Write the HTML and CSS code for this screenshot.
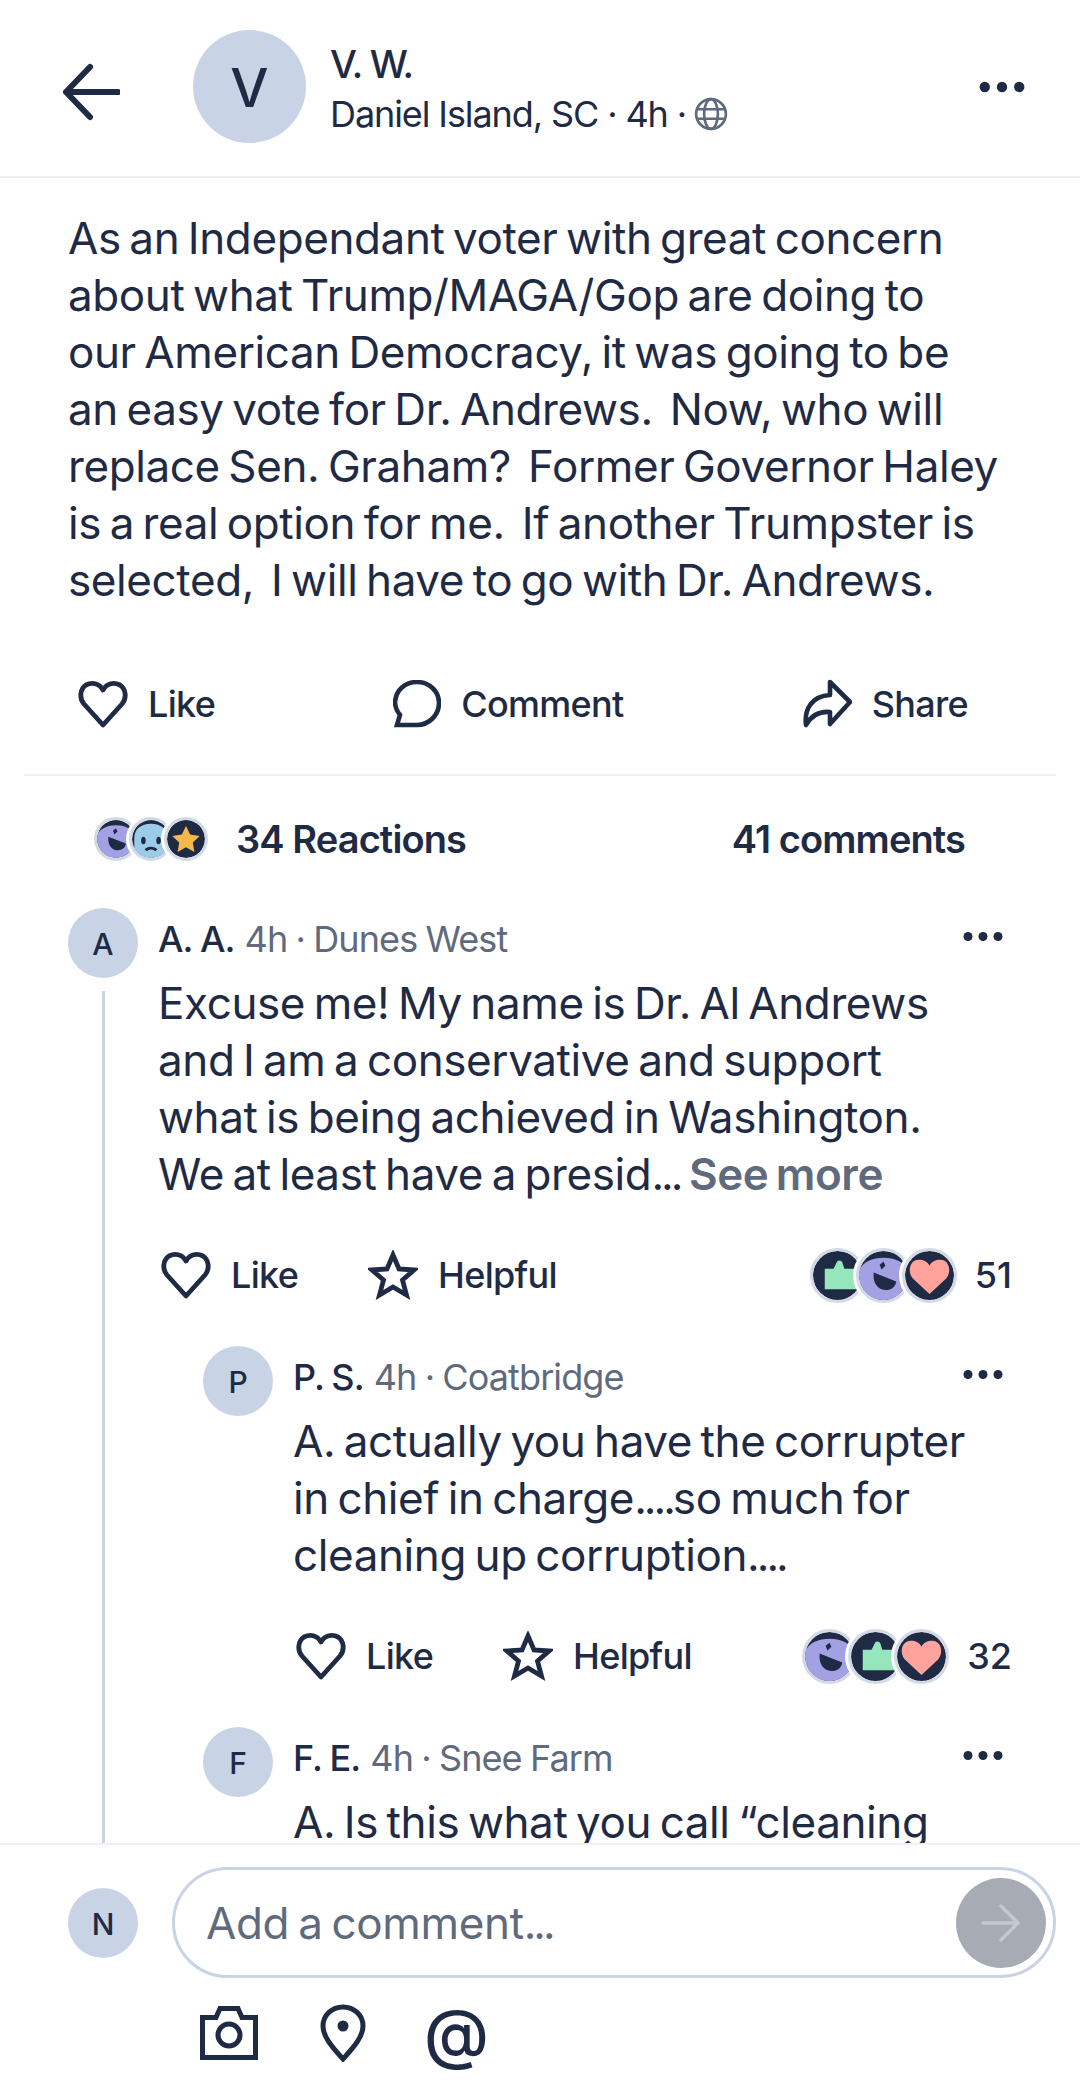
FILE: index.html
```html
<!doctype html>
<html lang="en">
<head>
  <meta charset="UTF-8">
  <meta name="viewport" content="width=device-width, initial-scale=1">
  <title>Post</title>
  <link rel="stylesheet" href="styles.css">
</head>
<body>
<svg class="defs" width="0" height="0">
  <symbol id="heart" viewBox="0 0 50 50">
    <path d="M25 46 6 25C1 19 2 10 8 6c6-3 13-2 17 5 4-7 11-8 17-5 6 4 7 13 2 19z" fill="none" stroke="currentColor" stroke-width="4.800" stroke-linejoin="round"/>
  </symbol>
  <symbol id="star" viewBox="0 0 50 50">
    <path d="M25 5l6 14 15 1-11.500 10 4 15L25 37l-13.500 8 4-15L4 20l15-1z" fill="none" stroke="currentColor" stroke-width="4.800" stroke-linejoin="miter"/>
  </symbol>
  <symbol id="dots" viewBox="0 0 40 10">
    <circle cx="5" cy="5" r="4.500" fill="currentColor"/><circle cx="20" cy="5" r="4.500" fill="currentColor"/><circle cx="35" cy="5" r="4.500" fill="currentColor"/>
  </symbol>
  <symbol id="rx-laugh" viewBox="0 0 50 50">
    <circle cx="25" cy="25" r="25" fill="#1f2a44"/>
    <path d="M0 20C4 11 14 7 25 7s21 4 25 13v5c0 14-11 25-25 25S0 39 0 25z" fill="#a3a0e4"/>
    <path d="M21 14l4-3 2 4-4 4zM41 24l4-3 2 4-4 4z" fill="#1f2a44"/>
    <path d="M15 22l23 9c-1 8-9 10-15 8-6-2-9-9-8-17z" fill="#1f2a44"/>
  </symbol>
  <symbol id="rx-sad" viewBox="0 0 50 50">
    <circle cx="25" cy="25" r="25" fill="#1f2a44"/>
    <path d="M3 50V24C3 12 12 5 25 5s22 7 22 19v26z" fill="#9ccbea"/>
    <ellipse cx="15" cy="27" rx="3" ry="5" fill="#1f2a44"/><ellipse cx="35" cy="27" rx="3" ry="5" fill="#1f2a44"/>
    <path d="M18 40c3-4 11-4 14 0" fill="none" stroke="#1f2a44" stroke-width="3.500"/>
  </symbol>
  <symbol id="rx-star" viewBox="0 0 50 50">
    <circle cx="25" cy="25" r="25" fill="#1f2a44"/>
    <path d="M25 8l5.500 11 12.500 2-9 8.500 2 12.500-11-6-11 6 2-12.500-9-8.500 12.500-2z" fill="#f7b84b"/>
  </symbol>
  <symbol id="rx-thumb" viewBox="0 0 50 50">
    <circle cx="25" cy="25" r="25" fill="#1f2a44"/>
    <path d="M12 18h9l3-6c1-3 5-3 6 0l2 6h18v21H12z" fill="#95e6bb"/>
  </symbol>
  <symbol id="rx-heart" viewBox="0 0 50 50">
    <circle cx="25" cy="25" r="25" fill="#1f2a44"/>
    <path d="M25 44 8 28C2 21 5 9 14 9c5 0 9 2 11 6 2-4 6-6 11-6 9 0 12 12 6 19z" fill="#ffa39c"/>
  </symbol>
</svg>

<div class="app">
  <header class="topbar">
    <svg class="back" width="58" height="58" viewBox="0 0 58 58"><path d="M28 4 4 29l24 25M4 29h52" fill="none" stroke="currentColor" stroke-width="6" stroke-linecap="round" stroke-linejoin="round"/></svg>
    <div class="avatar avatar-lg">V</div>
    <div class="who">
      <div class="who-name">V. W.</div>
      <div class="who-meta">Daniel Island, SC · 4h ·
        <svg class="globe" width="34" height="34" viewBox="0 0 32 32"><g fill="none" stroke="#5f6a7d" stroke-width="2.500"><circle cx="16" cy="16" r="14"/><ellipse cx="16" cy="16" rx="6.500" ry="14"/><path d="M2 11.500h28M2 20.500h28"/></g></svg>
      </div>
    </div>
    <svg class="more more-top" width="46" height="12"><use href="#dots"/></svg>
  </header>

  <main class="scroll">
    <section class="post">
      <p class="post-text">As an Independant voter with great concern<br>about what Trump/MAGA/Gop are doing to<br>our American Democracy, it was going to be<br>an easy vote for Dr. Andrews.&nbsp; Now, who will<br>replace Sen. Graham?&nbsp; Former Governor Haley<br>is a real option for me.&nbsp; If another Trumpster is<br>selected,&nbsp; I will have to go with Dr. Andrews.</p>
      <div class="post-actions">
        <div class="act"><svg width="50" height="50" class="ic"><use href="#heart"/></svg>Like</div>
        <div class="act"><svg width="48" height="48" viewBox="0 0 48 48" class="ic"><path d="M4 45l3-10C3 30 2 26 2 22 3 10 12 2 24 2s22 9 22 21-10 22-22 22z" fill="none" stroke="currentColor" stroke-width="4.600" stroke-linejoin="miter"/></svg>Comment</div>
        <div class="act"><svg width="50" height="50" viewBox="0 0 50 50" class="ic"><path d="M28 3l20 20-20 22V33C16 32 9 37 4 46c-2-16 6-29 24-30z" fill="none" stroke="currentColor" stroke-width="4.600" stroke-linejoin="round"/></svg>Share</div>
      </div>
    </section>

    <div class="stats">
      <div class="stats-left">
        <div class="rx-row rx-small">
          <svg class="rx"><use href="#rx-laugh"/></svg>
          <svg class="rx"><use href="#rx-sad"/></svg>
          <svg class="rx"><use href="#rx-star"/></svg>
        </div>
        <span>34 Reactions</span>
      </div>
      <span>41 comments</span>
    </div>

    <div class="thread">
      <article class="comment">
        <div class="avatar">A</div>
        <div class="comment-body">
          <div class="comment-head">
            <span class="c-name">A. A.</span> <span class="c-meta">4h · Dunes West</span>
            <svg class="more" width="40" height="11"><use href="#dots"/></svg>
          </div>
          <p class="comment-text">Excuse me! My name is Dr. Al Andrews<br>and I am a conservative and support<br>what is being achieved in Washington.<br>We at least have a presid<span class="tight">...</span> <b class="see">See more</b></p>
          <div class="comment-actions">
            <div class="act"><svg width="50" height="50" class="ic"><use href="#heart"/></svg>Like</div>
            <div class="act act-help"><svg width="50" height="50" class="ic"><use href="#star"/></svg>Helpful</div>
            <div class="rx-total">
              <div class="rx-row">
                <svg class="rx"><use href="#rx-thumb"/></svg>
                <svg class="rx"><use href="#rx-laugh"/></svg>
                <svg class="rx"><use href="#rx-heart"/></svg>
              </div>
              <span>51</span>
            </div>
          </div>
        </div>
      </article>

      <article class="comment reply">
        <div class="avatar">P</div>
        <div class="comment-body">
          <div class="comment-head">
            <span class="c-name">P. S.</span> <span class="c-meta">4h · Coatbridge</span>
            <svg class="more" width="40" height="11"><use href="#dots"/></svg>
          </div>
          <p class="comment-text">A. actually you have the corrupter<br>in chief in charge<span class="tight">....</span>so much for<br>cleaning up corruption<span class="tight">....</span></p>
          <div class="comment-actions">
            <div class="act"><svg width="50" height="50" class="ic"><use href="#heart"/></svg>Like</div>
            <div class="act act-help"><svg width="50" height="50" class="ic"><use href="#star"/></svg>Helpful</div>
            <div class="rx-total">
              <div class="rx-row">
                <svg class="rx"><use href="#rx-laugh"/></svg>
                <svg class="rx"><use href="#rx-thumb"/></svg>
                <svg class="rx"><use href="#rx-heart"/></svg>
              </div>
              <span>32</span>
            </div>
          </div>
        </div>
      </article>

      <article class="comment reply">
        <div class="avatar">F</div>
        <div class="comment-body">
          <div class="comment-head">
            <span class="c-name">F. E.</span> <span class="c-meta">4h · Snee Farm</span>
            <svg class="more" width="40" height="11"><use href="#dots"/></svg>
          </div>
          <p class="comment-text">A. Is this what you call “cleaning</p>
        </div>
      </article>
    </div>
  </main>

  <footer class="composer">
    <div class="composer-row">
      <div class="avatar">N</div>
      <div class="field">
        <span class="placeholder">Add a comment<span class="tight">...</span></span>
        <div class="send"><svg width="40" height="40" viewBox="0 0 40 40"><path d="M20 3l17 17-17 17M37 20H2" fill="none" stroke="#c3c8d1" stroke-width="3.500" stroke-linecap="round" stroke-linejoin="round"/></svg></div>
      </div>
    </div>
    <div class="tools">
      <svg width="58" height="54" viewBox="0 0 58 54"><g fill="none" stroke="currentColor" stroke-width="5"><path d="M2.500 51.500V11.500H16L20 2.500H38L42 11.500H55.500V51.500z"/><circle cx="29" cy="29" r="11"/></g></svg>
      <svg width="46" height="58" viewBox="0 0 46 58"><path d="M23 55C11 42 3 32 3 22 3 11 12 3 23 3s20 8 20 19c0 10-8 20-20 33z" fill="none" stroke="currentColor" stroke-width="5"/><circle cx="23" cy="22" r="5.500" fill="currentColor"/></svg>
      <span class="at">@</span>
    </div>
  </footer>
</div>
</body>
</html>
```

FILE: styles.css
```css
* {
  box-sizing: border-box;
}
html, body {
  margin: 0;
  padding: 0;
}
body {
  font-family: Inter, "Liberation Sans", sans-serif;
  color: #1f2a44;
  background: white;
}
.defs {
  position: absolute;
}
.app {
  width: 1080px;
  height: 2096px;
  display: flex;
  flex-direction: column;
  overflow: hidden;
}
.topbar {
  height: 178px;
  flex: none;
  display: flex;
  align-items: center;
  padding: 0 24px 4px 62px;
  border-bottom: 2px solid #eceef1;
}
.back {
  margin-top: 12px;
}
.avatar {
  width: 70px;
  height: 70px;
  flex: none;
  border-radius: 50%;
  background: #c8d3e5;
  display: flex;
  align-items: center;
  justify-content: center;
  font-size: 30px;
  font-weight: 500;
  padding-top: 2px;
}
.avatar-lg {
  width: 113px;
  height: 113px;
  margin-left: 73px;
  font-size: 54px;
}
.who {
  margin-left: 24px;
  flex: 1;
}
.who-name {
  font-size: 38px;
  font-weight: 500;
  line-height: 50px;
  letter-spacing: -1.6px;
  padding-top: 5px;
}
.who-meta {
  font-size: 36px;
  line-height: 50px;
  display: flex;
  align-items: center;
  gap: 8px;
  letter-spacing: -1.1px;
}
.globe {
  flex: none;
}
.more {
  display: block;
  color: #1f2a44;
}
.more-top {
  margin: 0 0 0 auto;
  margin-right: 31px;
  transform: translateY(1px);
}
.scroll {
  flex: 1;
  min-height: 0;
  overflow: hidden;
}
.post {
  margin: 0 24px;
  padding: 32px 44px 0;
  height: 598px;
  border-bottom: 2px solid #eff1f4;
}
.post-text, .comment-text {
  margin: 0;
  font-size: 44px;
  line-height: 57px;
  white-space: nowrap;
  letter-spacing: -0.4px;
  word-spacing: -3.4px;
}
.tight {
  letter-spacing: -3px;
}
.post-actions {
  margin-top: 70px;
  display: flex;
  justify-content: space-between;
  padding: 0 0 0 10px;
  width: 900px;
}
.act {
  display: flex;
  align-items: center;
  gap: 20px;
  font-size: 36px;
  font-weight: 500;
  letter-spacing: -0.7px;
  height: 50px;
}
.ic {
  flex: none;
}
.stats {
  height: 126px;
  padding: 0 115px 0 94px;
  display: flex;
  align-items: center;
  justify-content: space-between;
  font-size: 38px;
  font-weight: 600;
  letter-spacing: -0.9px;
}
.stats-left {
  display: flex;
  align-items: center;
  gap: 28px;
}
.rx-row {
  display: flex;
}
.rx {
  width: 55px;
  height: 55px;
  flex: none;
  border-radius: 50%;
  border: 3px solid #d3dae6;
  box-shadow: 0 0 0 3px white;
  background: white;
  margin-left: -9px;
}
.rx:first-child {
  margin-left: 0;
}
.rx-small .rx {
  width: 44px;
  height: 44px;
}
.thread {
  position: relative;
  padding: 6px 0 0 68px;
}
.thread::before {
  content: "";
  position: absolute;
  left: 102px;
  top: 89px;
  bottom: -200px;
  width: 3px;
  background: #c8d3e5;
}
.comment {
  display: flex;
  gap: 20px;
  position: relative;
}
.reply {
  margin-left: 135px;
  margin-top: 46px;
}
.comment-body {
  flex: 1;
  min-width: 0;
}
.comment-head {
  display: flex;
  align-items: center;
  gap: 10px;
  font-size: 36px;
  line-height: 48px;
  letter-spacing: -0.9px;
  word-spacing: -1px;
  margin-top: 7px;
}
.c-name {
  font-weight: 500;
}
.c-meta {
  color: #5f6a7d;
}
.comment-head .more {
  margin-left: auto;
  margin-right: 77px;
  margin-top: -6px;
}
.comment-text {
  margin-top: 12px;
}
.see {
  color: #5f6a7d;
  font-weight: 600;
}
.comment-actions {
  margin-top: 47px;
  height: 50px;
  display: flex;
  align-items: center;
  padding-left: 3px;
}
.act-help {
  margin-left: 70px;
}
.rx-total {
  margin-left: auto;
  margin-right: 68px;
  display: flex;
  align-items: center;
  gap: 18px;
  font-size: 36px;
  font-weight: 500;
}
.composer {
  height: 253px;
  flex: none;
  border-top: 2px solid #eff1f4;
  padding: 22px 24px 0 68px;
  background: white;
  position: relative;
}
.composer-row {
  display: flex;
  align-items: center;
  gap: 34px;
}
.field {
  flex: 1;
  height: 111px;
  border: 3px solid #c8d3e5;
  border-radius: 56px;
  display: flex;
  align-items: center;
  justify-content: space-between;
  padding: 0 7px 0 31px;
}
.placeholder {
  font-size: 44px;
  color: #5f6a7d;
  letter-spacing: -0.36px;
  word-spacing: -3px;
}
.send {
  width: 90px;
  height: 90px;
  border-radius: 50%;
  background: #a6abb4;
  display: flex;
  align-items: center;
  justify-content: center;
}
.tools {
  display: flex;
  align-items: center;
  margin: 26px 0 0 132px;
  gap: 62px;
}
.at {
  font-size: 66px;
  line-height: 58px;
  font-weight: 500;
  margin-left: -4px;
}
```
